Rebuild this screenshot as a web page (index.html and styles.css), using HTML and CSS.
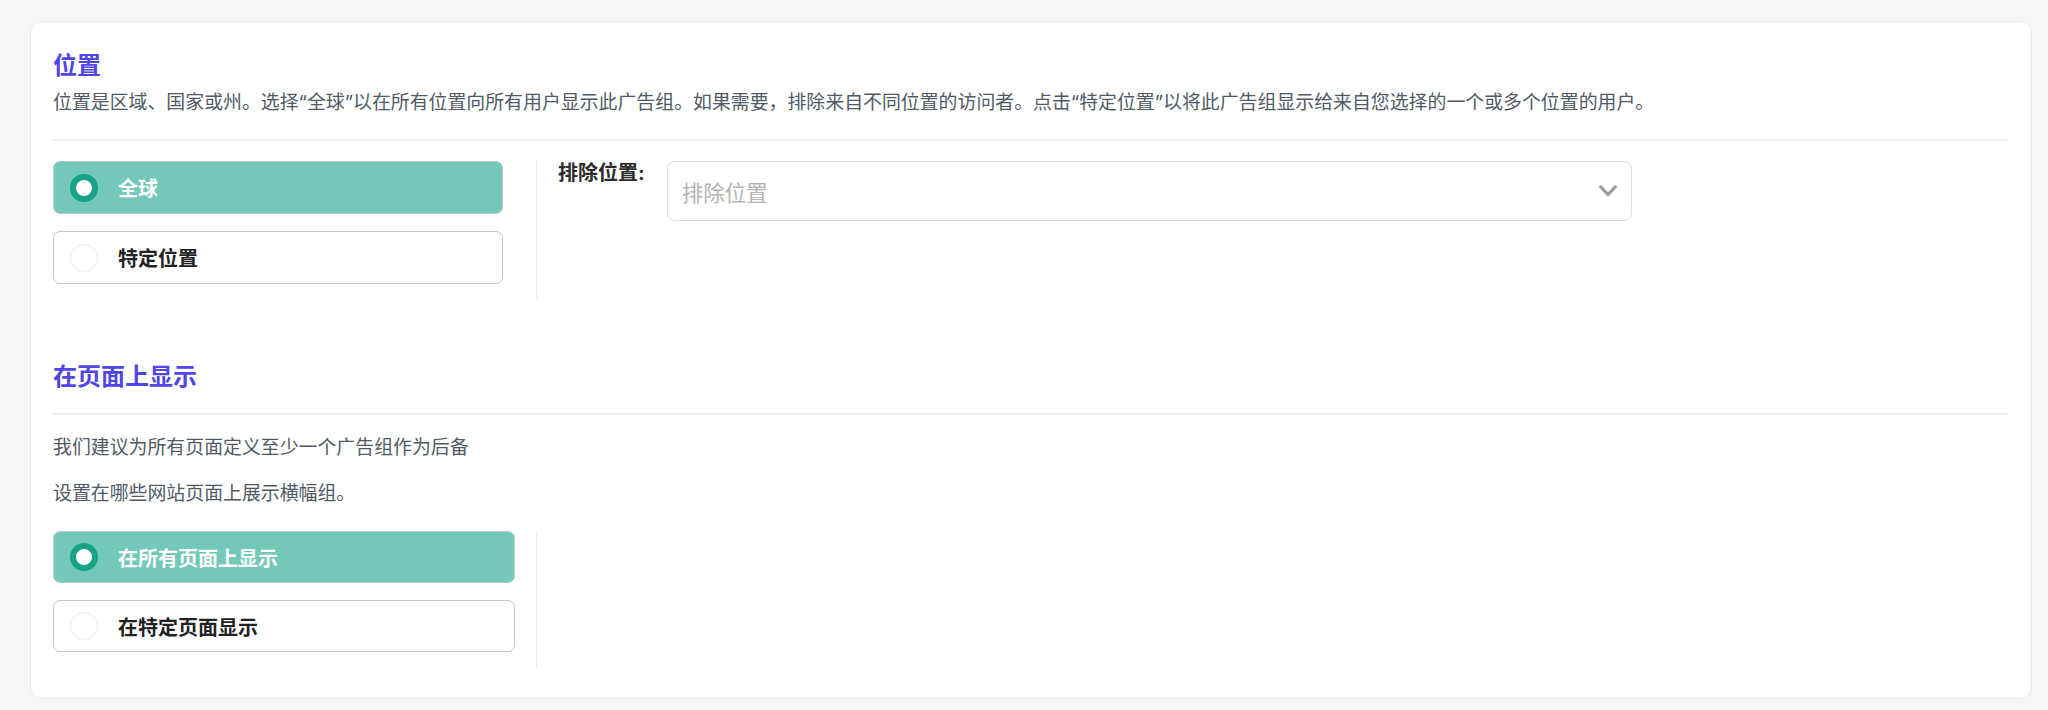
FILE: index.html
```html
<!DOCTYPE html>
<html lang="zh-CN">
<head>
<meta charset="utf-8">
<title>位置</title>
<link rel="stylesheet" href="styles.css">
</head>
<body>
<div class="card">
  <section class="section">
    <h2 class="title">位置</h2>
    <p class="desc">位置是区域、国家或州。选择“全球”以在所有位置向所有用户显示此广告组。如果需要，排除来自不同位置的访问者。点击“特定位置”以将此广告组显示给来自您选择的一个或多个位置的用户。</p>
    <hr class="divider divider-loc">
    <div class="row">
      <div class="options">
        <label class="option selected"><span class="radio"></span><span class="option-text">全球</span></label>
        <label class="option"><span class="radio"></span><span class="option-text">特定位置</span></label>
      </div>
      <div class="side">
        <span class="side-label">排除位置:</span>
        <div class="select">
          <span class="placeholder">排除位置</span>
          <svg class="chevron" width="18" height="12" viewBox="0 0 18 12"><polyline points="1.6,1.8 9,9.6 16.4,1.8" fill="none" stroke="#9a9a9a" stroke-width="3" stroke-linecap="round" stroke-linejoin="round"/></svg>
        </div>
      </div>
    </div>
  </section>

  <section class="section section-pages">
    <h2 class="title">在页面上显示</h2>
    <hr class="divider divider-pages">
    <p class="desc desc-first">我们建议为所有页面定义至少一个广告组作为后备</p>
    <p class="desc desc-second">设置在哪些网站页面上展示横幅组。</p>
    <div class="row">
      <div class="options options-wide">
        <label class="option selected"><span class="radio"></span><span class="option-text">在所有页面上显示</span></label>
        <label class="option"><span class="radio"></span><span class="option-text">在特定页面显示</span></label>
      </div>
      <div class="side"></div>
    </div>
  </section>
</div>
</body>
</html>
```

FILE: styles.css
```css
* { box-sizing: border-box; }

html, body { margin: 0; }

body {
  background: #f5f6f8;
  padding: 21px 16px 11px 30px;
  height: 710px;
  font-family: Inter, "Noto Sans CJK SC", sans-serif;
  color: #333;
}

.card {
  background: #fff;
  border: 1px solid #e8e8ed;
  border-radius: 12px;
  padding: 28px 23px 30px 22px;
}

.title {
  margin: 0;
  font-size: 24px;
  line-height: 32px;
  font-weight: 600;
  color: #4f46e5;
}

.desc {
  margin: 7px 0 0;
  font-size: 18.9px;
  line-height: 28px;
  color: #505a66;
}

.divider {
  border: 0;
  height: 2px;
  background: #f1f1f5;
  margin: 22px 0 20px;
}

.divider-pages { margin: 20px 0 0; }

.desc-first { margin-top: 19px; }
.desc-second { margin-top: 18px; }

.section-pages { margin-top: 62px; }
.section-pages .row { margin-top: 23px; }

.row {
  display: flex;
}

.options {
  width: 484px;
  padding: 0 33px 15px 0;
  border-right: 1px solid #ececec;
  display: flex;
  flex-direction: column;
  gap: 17px;
}

.options-wide { padding-right: 21px; padding-bottom: 16px; }

.option {
  display: flex;
  align-items: center;
  gap: 20px;
  height: 53px;
  padding: 0 16px;
  border: 1px solid #c4c4c4;
  border-radius: 7px;
  background: #fff;
}

.options-wide .option { height: 52px; }

.option.selected {
  background: #74c8b9;
  border-color: #b9c9c5;
}

.radio {
  width: 28px;
  height: 28px;
  border-radius: 50%;
  border: 1px solid #ebebeb;
  background: #fff;
  flex: none;
}

.selected .radio {
  border: 6px solid #16a386;
}

.option-text {
  font-size: 20px;
  font-weight: 700;
  color: #222;
}

.selected .option-text { color: #fff; }

.side {
  flex: 1;
  display: flex;
  align-items: flex-start;
  gap: 22px;
  padding-left: 21px;
}

.side-label {
  font-size: 20px;
  line-height: 24px;
  font-weight: 700;
  color: #2b2b2b;
  white-space: nowrap;
}

.select {
  width: 965px;
  height: 60px;
  border: 1px solid #dcdcdc;
  border-radius: 8px;
  display: flex;
  align-items: center;
  justify-content: space-between;
  padding: 0 14px 0 14px;
}

.placeholder {
  font-size: 21.5px;
  color: #b3b3b3;
}
```
